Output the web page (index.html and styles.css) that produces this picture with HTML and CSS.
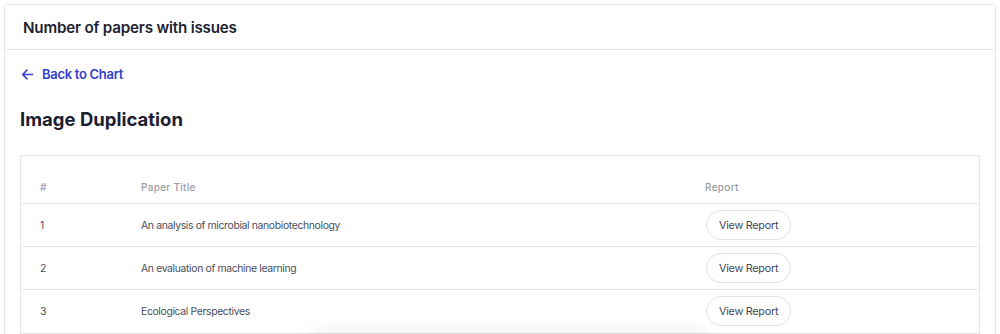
FILE: index.html
```html
<!DOCTYPE html>
<html lang="en">
<head>
<meta charset="utf-8">
<title>Number of papers with issues</title>
<link rel="stylesheet" href="styles.css">
</head>
<body>
<div class="page">
  <section class="card">
    <header class="card-header">
      <h2 class="card-title">Number of papers with issues</h2>
    </header>
    <div class="card-body">
      <a class="back-link" href="#">
        <svg class="back-icon" width="13" height="13" viewBox="0 0 14 14" fill="none" stroke="currentColor" stroke-width="1.6" stroke-linecap="round" stroke-linejoin="round"><path d="M12.5 7H1.8M6.5 2.3L1.8 7l4.7 4.7"/></svg>
        <span>Back to Chart</span>
      </a>
      <h1 class="section-title">Image Duplication</h1>
      <div class="table-wrap">
        <table class="papers">
          <thead>
            <tr>
              <th class="col-num">#</th>
              <th class="col-title">Paper Title</th>
              <th class="col-report">Report</th>
            </tr>
          </thead>
          <tbody>
            <tr>
              <td>1</td>
              <td>An analysis of microbial nanobiotechnology</td>
              <td><button class="report-btn">View Report</button></td>
            </tr>
            <tr>
              <td>2</td>
              <td>An evaluation of machine learning</td>
              <td><button class="report-btn">View Report</button></td>
            </tr>
            <tr>
              <td>3</td>
              <td>Ecological Perspectives</td>
              <td><button class="report-btn">View Report</button></td>
            </tr>
          </tbody>
        </table>
      </div>
    </div>
  </section>
  <div class="floating-shadow"></div>
</div>
</body>
</html>
```

FILE: styles.css
```css
* { box-sizing: border-box; }
html, body { margin: 0; padding: 0; background: #ffffff; }
body {
  font-family: Inter, "Liberation Sans", Arial, sans-serif;
  color: #1f2330;
  overflow: hidden;
  height: 334px;
}
.page {
  position: relative;
  padding: 4px 4px 0 4px;
  height: 334px;
}
.card {
  border: 1px solid #e6e6e6;
  border-radius: 3px 3px 0 0;
  background: #fff;
  width: 992px;
  height: 400px;
}
.card-header {
  height: 45px;
  display: flex;
  align-items: center;
  padding: 0 18px;
  border-bottom: 1px solid #e6e6e6;
}
.card-title {
  margin: 0;
  font-size: 15.2px;
  font-weight: 600;
  letter-spacing: -0.2px;
  color: #1e2230;
}
.card-body {
  padding: 14px 15px 0 15px;
}
.back-link {
  display: inline-flex;
  align-items: center;
  gap: 8px;
  color: #3441cc;
  text-decoration: none;
  font-size: 13px;
  font-weight: 600;
  letter-spacing: -0.3px;
  height: 20px;
  margin-left: 1px;
}
.back-icon { display: block; }
.section-title {
  margin: 21px 0 0 0;
  font-size: 18.5px;
  font-weight: 700;
  color: #1c2030;
  line-height: 26px;
}
.table-wrap {
  margin-top: 23px;
  border: 1px solid #e6e6e6;
  width: 960px;
}
.papers {
  width: 100%;
  border-collapse: collapse;
  font-size: 10.4px;
  letter-spacing: -0.35px;
}
.papers th {
  text-align: left;
  font-weight: 500;
  font-size: 10px;
  letter-spacing: 0.3px;
  color: #9a9ca4;
  height: 48px;
  padding: 15px 0 0 0;
  vertical-align: middle;
  border-bottom: 1px solid #e6e6e6;
}
.papers td {
  height: 43px;
  color: #4a4e5a;
  vertical-align: middle;
  border-bottom: 1px solid #e6e6e6;
  padding: 0;
}
.papers tbody tr:last-child td { border-bottom: none; }
.papers th:first-child, .papers td:first-child { padding-left: 19px; }
.col-num { width: 120px; }
.col-title { width: 564px; }
.report-btn {
  font-family: inherit;
  font-size: 10.8px;
  letter-spacing: -0.25px;
  color: #434753;
  background: #fff;
  border: 1px solid #e2e2e2;
  border-radius: 16px;
  height: 30px;
  padding: 0 12px;
  margin-left: 1px;
  cursor: pointer;
}
.floating-shadow {
  position: absolute;
  left: 310px;
  top: 336px;
  width: 400px;
  height: 40px;
  border-radius: 16px;
  box-shadow: 0 0 22px rgba(0, 0, 0, 0.13);
  background: #fff;
}
```
